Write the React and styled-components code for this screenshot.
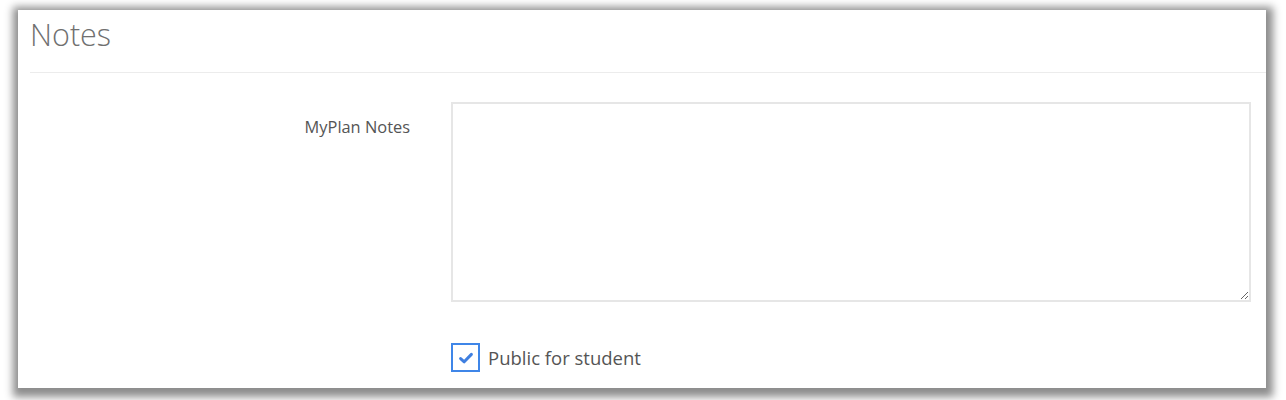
import React, { useState } from "react";
import styled, { createGlobalStyle } from "styled-components";

const GlobalStyle = createGlobalStyle`
  html, body {
    margin: 0;
    padding: 0;
    background: #ffffff;
    font-family: "Open Sans", "Noto Sans", sans-serif;
  }
`;

export default function App() {
  const [isPublic, setIsPublic] = useState(true);

  return (
    <>
      <GlobalStyle />
      <Page>
        <Panel>
          <Header>
            <h1>Notes</h1>
          </Header>
          <FormRow>
            <Label htmlFor="myplan-notes">MyPlan Notes</Label>
            <Notes id="myplan-notes" />
          </FormRow>
          <CheckRow>
            <CheckLabel>
              <Box $checked={isPublic} onClick={() => setIsPublic(!isPublic)}>
                {isPublic && (
                  <svg width="18" height="18" viewBox="0 0 18 18">
                    <path
                      d="M3.6 9.6 L7.2 12.8 L14.4 5.4"
                      fill="none"
                      stroke="#3f7fe0"
                      strokeWidth="3"
                      strokeLinecap="round"
                      strokeLinejoin="round"
                    />
                  </svg>
                )}
              </Box>
              <span>Public for student</span>
            </CheckLabel>
          </CheckRow>
        </Panel>
      </Page>
    </>
  );
}

const Page = styled.div`
  padding: 10px 20px 12px 18px;
`;

const Panel = styled.div`
  width: 1248px;
  height: 378px;
  background: #ffffff;
  box-shadow: 1px 3px 8px 6px rgba(0, 0, 0, 0.45);
  overflow: hidden;
  box-sizing: border-box;
`;

const Header = styled.div`
  margin-left: 12px;
  border-bottom: 1px solid #ececec;
  height: 63px;
  box-sizing: border-box;

  h1 {
    margin: 0;
    padding-top: 5px;
    font-family: "Open Sans", sans-serif;
    font-weight: 300;
    font-size: 30.5px;
    line-height: 38px;
    color: #707070;
  }
`;

const FormRow = styled.div`
  display: grid;
  grid-template-columns: 392px 800px;
  column-gap: 41px;
  margin-top: 29px;
`;

const Label = styled.label`
  text-align: right;
  font-size: 16.4px;
  line-height: 22px;
  color: #555555;
  padding-top: 14px;
`;

const Notes = styled.textarea`
  width: 800px;
  height: 200px;
  box-sizing: border-box;
  border: 2px solid #e6e6e6;
  border-radius: 0;
  outline: none;
  resize: vertical;
  font-family: inherit;
  font-size: 14px;
  padding: 6px 10px;
`;

const CheckRow = styled.div`
  padding-left: 433px;
  margin-top: 41px;
`;

const CheckLabel = styled.label`
  display: inline-flex;
  align-items: center;
  gap: 8px;
  font-size: 18.5px;
  color: #555555;
  cursor: pointer;
`;

const Box = styled.span`
  width: 29px;
  height: 29px;
  box-sizing: border-box;
  border: 2px solid ${(p) => (p.$checked ? "#3f86e8" : "#bbbbbb")};
  display: inline-flex;
  align-items: center;
  justify-content: center;
  background: #ffffff;
`;
